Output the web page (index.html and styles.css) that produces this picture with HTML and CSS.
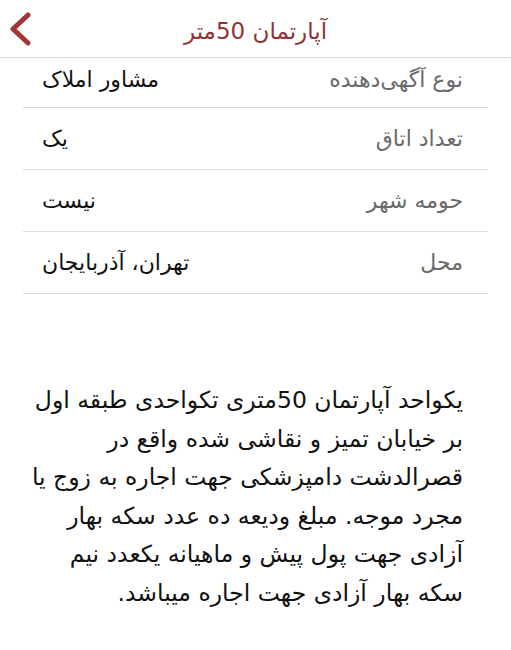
FILE: index.html
```html
<!DOCTYPE html>
<html lang="fa" dir="rtl">
<head>
  <meta charset="UTF-8">
  <title>آپارتمان 50متر</title>
  <link rel="stylesheet" href="styles.css">
</head>

<body>

  <header class="barra-topo">
    <a href="#voltar" class="voltar" aria-label="بازگشت">
      <svg width="24" height="34" viewBox="0 0 24 34">
        <path d="M20 3 L5 17 L20 31" fill="none" stroke="#a23535" stroke-width="5" stroke-linecap="round" stroke-linejoin="round"/>
      </svg>
    </a>
    <h1 class="titulo">آپارتمان 50متر</h1>
    <span class="espaco"></span>
  </header>

  <main class="detalhes">
    <ul class="lista-info">
      <li class="linha primeira">
        <span class="rotulo">نوع آگهی‌دهنده</span>
        <span class="valor">مشاور املاک</span>
      </li>
      <li class="linha">
        <span class="rotulo">تعداد اتاق</span>
        <span class="valor">یک</span>
      </li>
      <li class="linha">
        <span class="rotulo">حومه شهر</span>
        <span class="valor">نیست</span>
      </li>
      <li class="linha">
        <span class="rotulo">محل</span>
        <span class="valor">تهران، آذربایجان</span>
      </li>
    </ul>

    <!-- quebras iguais ao app -->
    <p class="descricao">
      یکواحد آپارتمان 50متری تکواحدی طبقه اول<br>
      بر خیابان تمیز و نقاشی شده واقع در<br>
      قصرالدشت دامپزشکی جهت اجاره به زوج یا<br>
      مجرد موجه. مبلغ ودیعه ده عدد سکه بهار<br>
      آزادی جهت پول پیش و ماهیانه یکعدد نیم<br>
      سکه بهار آزادی جهت اجاره میباشد.
    </p>
  </main>

</body>
</html>
```

FILE: styles.css
```css
/* Reset */
* {
  margin: 0;
  padding: 0;
  box-sizing: border-box;
}

body {
  background: #fff;
  font-family: "DejaVu Sans", "Noto Sans", sans-serif;
  color: #111;
  width: 100vw;
  height: 100vh;
}

.barra-topo {
  direction: ltr;
  display: grid;
  grid-template-columns: 60px 1fr 60px;
  align-items: center;
  height: 58px;
  border-bottom: 1px solid #d9d9d9;
}

.voltar {
  display: flex;
  align-items: center;
  padding-left: 8px;
  height: 100%;
}

.titulo {
  text-align: center;
  font-size: 23px;
  font-weight: normal;
  color: #8e3434;
  padding-top: 4px;
}

.lista-info {
  list-style: none;
  padding: 0 23px 0 23px;
}

.linha {
  display: flex;
  justify-content: space-between;
  align-items: center;
  height: 62px;
  padding: 0 25px 0 19px;
  border-bottom: 1px solid #dcdcdc;
  font-size: 22px;
}

.linha.primeira {
  height: 50px;
  padding-bottom: 6px;
}

.rotulo {
  color: #6a6a6a;
}

.valor {
  color: #111;
}

.descricao {
  padding: 87px 48px 0 20px;
  font-size: 23.5px;
  line-height: 38.5px;
  color: #111;
  white-space: nowrap;
}
```
